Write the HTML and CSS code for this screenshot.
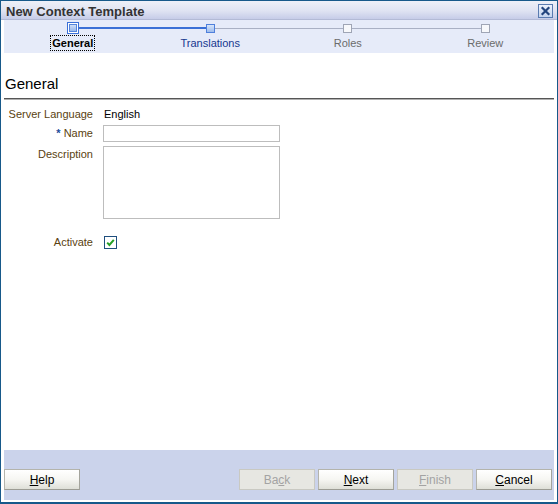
FILE: index.html
```html
<!DOCTYPE html>
<html>
<head>
<meta charset="utf-8">
<link rel="stylesheet" href="styles.css">
</head>
<body>
<div class="window">
  <div class="titlebar">
    <span class="title">New Context Template</span>
    <span class="close" title="Close">
      <svg width="15" height="14" viewBox="0 0 15 14">
        <defs>
          <linearGradient id="cg" x1="0" y1="0" x2="0" y2="1">
            <stop offset="0" stop-color="#eef3fc"/>
            <stop offset="1" stop-color="#c3d3ee"/>
          </linearGradient>
        </defs>
        <rect x="0.5" y="0.5" width="14" height="13" fill="url(#cg)" stroke="#5a7bb0"/>
        <path d="M4.5 4 L10.5 10 M10.5 4 L4.5 10" stroke="#23457e" stroke-width="2.2" stroke-linecap="square"/>
      </svg>
    </span>
  </div>

  <div class="train">
    <div class="step">
      <div class="icon-row"><span class="seg"></span><span class="box-current"><span class="box-inner"></span></span><span class="seg blue"></span></div>
      <span class="label current">General</span>
    </div>
    <div class="step">
      <div class="icon-row"><span class="seg blue"></span><span class="box-next"></span><span class="seg gray"></span></div>
      <span class="label next">Translations</span>
    </div>
    <div class="step">
      <div class="icon-row"><span class="seg gray"></span><span class="box-off"></span><span class="seg gray"></span></div>
      <span class="label off">Roles</span>
    </div>
    <div class="step">
      <div class="icon-row"><span class="seg gray"></span><span class="box-off"></span><span class="seg"></span></div>
      <span class="label off">Review</span>
    </div>
  </div>

  <div class="content">
    <h2 class="header">General</h2>
    <div class="form">
      <label class="flabel">Server Language</label>
      <div class="fvalue">English</div>

      <label class="flabel mid"><span class="req">*</span> Name</label>
      <div><input class="text" type="text"></div>

      <label class="flabel top">Description</label>
      <div><textarea class="area"></textarea></div>

      <label class="flabel mid act">Activate</label>
      <div class="act">
        <span class="check">
          <svg width="13" height="13" viewBox="0 0 13 13">
            <rect x="0.5" y="0.5" width="12" height="12" fill="#ffffff" stroke="#1f4f7e"/>
            <path d="M3.2 6.6 L5.4 8.9 L9.8 3.9" fill="none" stroke="#25a025" stroke-width="2"/>
          </svg>
        </span>
      </div>
    </div>
  </div>

  <div class="footer">
    <button class="btn"><u>H</u>elp</button>
    <span class="spacer"></span>
    <button class="btn disabled">Ba<u>c</u>k</button>
    <button class="btn"><u>N</u>ext</button>
    <button class="btn disabled"><u>F</u>inish</button>
    <button class="btn"><u>C</u>ancel</button>
  </div>
</div>
</body>
</html>
```

FILE: styles.css
```css
html, body {
  margin: 0;
  padding: 0;
  background: #ffffff;
}

body {
  font-family: "Liberation Sans", Arial, sans-serif;
  font-size: 11px;
  color: #000;
}

.window {
  width: 558px;
  height: 504px;
  box-sizing: border-box;
  border: 1px solid #17598a;
  border-bottom-width: 2px;
  display: flex;
  flex-direction: column;
  background: #ffffff;
}

.titlebar {
  height: 18px;
  flex: 0 0 18px;
  display: flex;
  align-items: center;
  justify-content: space-between;
  padding: 0 4px 0 5px;
  background: linear-gradient(#eef0f8, #dfe3f2 55%, #c6cce8);
  border-bottom: 1px solid #b3bad6;
}

.title {
  font-size: 13px;
  font-weight: bold;
  color: #333333;
  padding-top: 2px;
}

.close {
  display: flex;
  width: 15px;
  height: 14px;
  margin-top: 1px;
}

.train {
  height: 33px;
  flex: 0 0 33px;
  margin: 0 3px;
  background: #e6ebf9;
  display: grid;
  grid-template-columns: repeat(4, 1fr);
  width: 550px;
  box-sizing: border-box;
}

.step {
  display: flex;
  flex-direction: column;
  align-items: center;
}

.icon-row {
  width: 100%;
  height: 14px;
  margin-top: 1px;
  display: flex;
  align-items: center;
}

.seg {
  flex: 1;
  height: 1px;
}

.seg.blue { background: #3a6fd6; height: 2px; }
.seg.gray { background: #a9b0c4; }

.box-current {
  width: 12px;
  height: 12px;
  box-sizing: border-box;
  border: 1px solid #3b70d8;
  background: #ffffff;
  padding: 1px;
  display: flex;
}

.box-inner {
  flex: 1;
  border: 1px solid #5585dc;
  background: linear-gradient(#cfdff8, #98b7ea);
}

.box-next {
  width: 9px;
  height: 9px;
  box-sizing: border-box;
  border: 1px solid #4f80dc;
  background: linear-gradient(#d8e6fa, #9ebcec);
}

.box-off {
  width: 9px;
  height: 9px;
  box-sizing: border-box;
  border: 1px solid #9fa5b5;
  background: #f7f8fb;
}

.label {
  line-height: 14px;
  padding: 0 1px;
  border: 1px dotted transparent;
}

.label.current {
  font-weight: bold;
  color: #000;
  border-color: #000;
}

.label.next { color: #17388f; }
.label.off { color: #6b6b6b; }

.content {
  flex: 1;
  padding: 0 3px 0 3px;
}

.header {
  margin: 22px 0 0 0;
  font-size: 15px;
  font-weight: normal;
  line-height: 18px;
  padding: 0 0 5px 1px;
  border-bottom: 1px solid #555555;
  box-shadow: 0 1px 0 #b0b0b0;
  color: #000;
}

.form {
  margin-top: 8px;
  display: grid;
  grid-template-columns: 89px 1fr;
  column-gap: 10px;
  row-gap: 4px;
  align-items: start;
}

.flabel {
  text-align: right;
  color: #5a4210;
  line-height: 14px;
}

.flabel.mid { line-height: 17px; }
.flabel.top { padding-top: 1px; }

.req { color: #1a4b9b; font-weight: bold; }

.fvalue {
  line-height: 14px;
  padding-left: 1px;
}

.text {
  display: block;
  width: 177px;
  height: 17px;
  box-sizing: border-box;
  border: 1px solid #bdbdbd;
  margin: 0;
  padding: 0;
}

.area {
  display: block;
  width: 177px;
  height: 73px;
  box-sizing: border-box;
  border: 1px solid #bdbdbd;
  margin: 0;
  padding: 0;
  resize: none;
}

.flabel.act, .act {
  margin-top: 12px;
}

.flabel.act { margin-top: 11px; }

.check {
  display: flex;
  width: 13px;
  height: 13px;
  margin: 1px 0 0 1px;
}

.footer {
  flex: 0 0 50px;
  height: 50px;
  margin: 0 3px 2px 3px;
  padding: 19px 2px 0 0;
  background: #cbd3eb;
  display: flex;
  align-items: flex-start;
  box-sizing: border-box;
  gap: 3px;
}

.spacer { flex: 1; }

.btn {
  width: 76px;
  height: 21px;
  margin: 0;
  padding: 0;
  font-family: "Liberation Sans", Arial, sans-serif;
  font-size: 12px;
  color: #000;
  border: 1px solid #b4b4ac;
  border-bottom-color: #9c9c94;
  border-right-color: #a4a49c;
  background: linear-gradient(#ffffff, #f6f6f2 50%, #dedfd8);
  box-sizing: border-box;
}

.btn.disabled {
  color: #a3a3a3;
  background: #e7e7e2;
  border-color: #c9c9c2;
}
```
